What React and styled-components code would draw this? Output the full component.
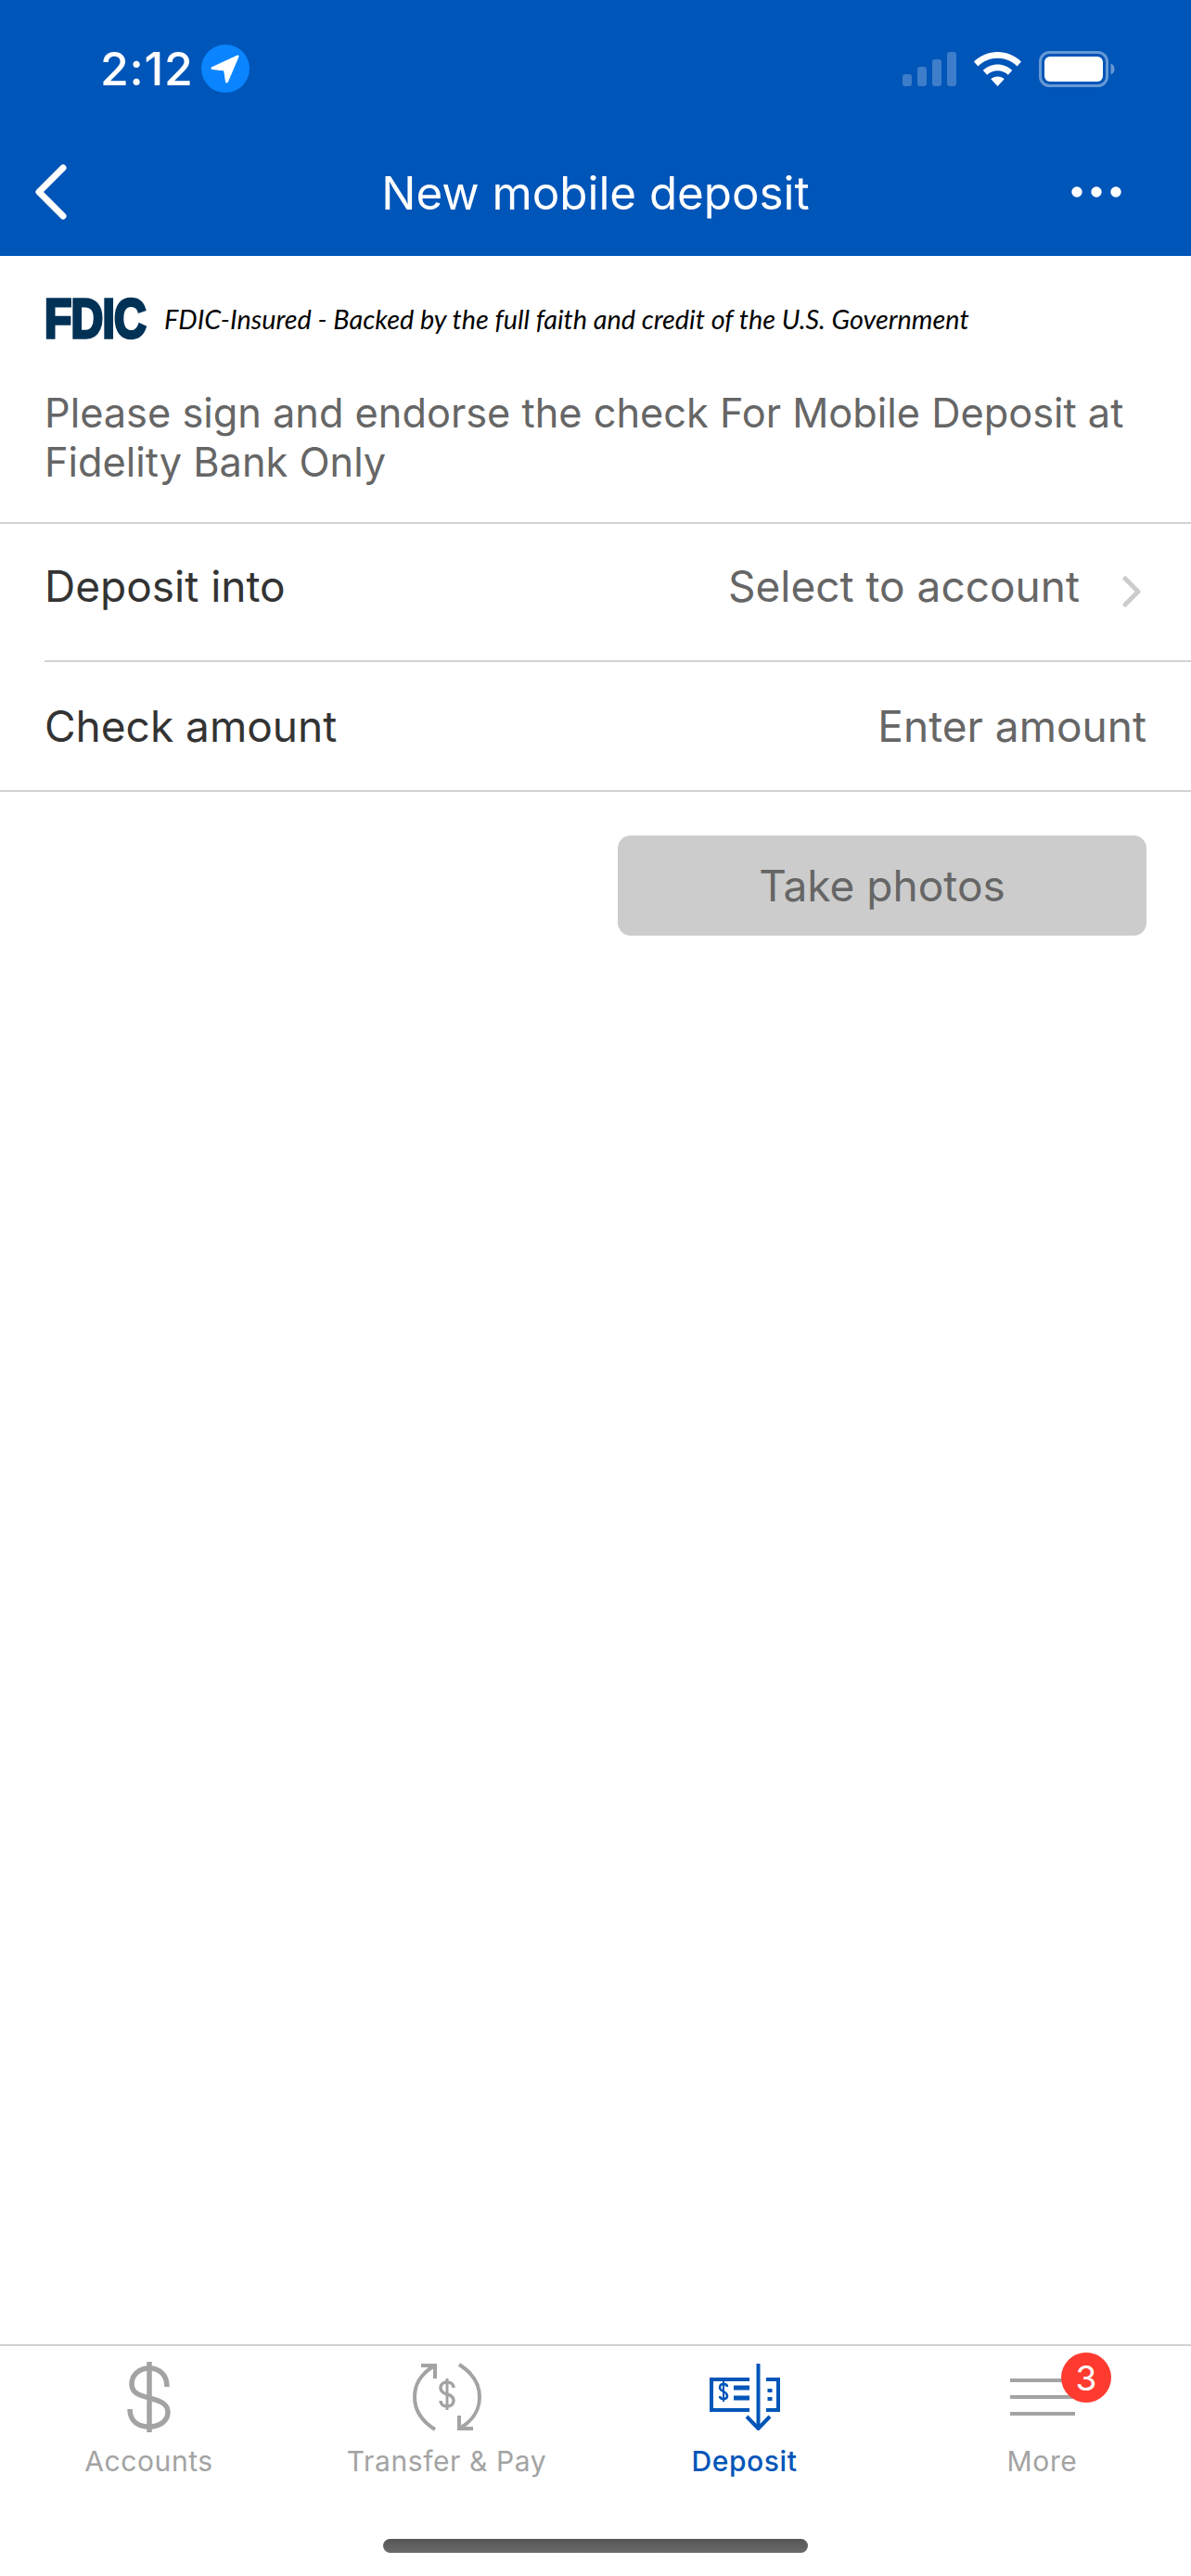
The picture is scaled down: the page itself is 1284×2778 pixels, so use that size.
import styled, { createGlobalStyle } from "styled-components";

const BLUE = "#0055b8";
const GREY_TEXT = "#666666";
const RULE = "#d2d2d2";
const TAB_GREY = "#a3a3a3";

const Global = createGlobalStyle`
  html, body { margin: 0; padding: 0; background: #fff; }
  * { box-sizing: border-box; }
`;

const Screen = styled.div`
  width: 1284px;
  height: 2778px;
  display: flex;
  flex-direction: column;
  overflow: hidden;
  background: #fff;
  font-family: Inter, "Liberation Sans", sans-serif;
`;

const Header = styled.header`
  background: ${BLUE};
  height: 276px;
  color: #fff;
`;

const StatusBar = styled.div`
  height: 148px;
  display: flex;
  align-items: center;
  justify-content: space-between;
  padding: 0 82px 0 108px;
`;

const TimeGroup = styled.div`
  display: flex;
  align-items: center;
  gap: 8px;
`;

const Time = styled.span`
  font-size: 50px;
  font-weight: 500;
  letter-spacing: 0.8px;
  line-height: 1;
`;

const Indicators = styled.div`
  display: flex;
  align-items: center;
  gap: 19px;
`;

const NavBar = styled.nav`
  height: 128px;
  padding-bottom: 6px;
  display: grid;
  grid-template-columns: 1fr auto 1fr;
  align-items: center;
`;

const Title = styled.h1`
  margin: 0;
  font-size: 49.300px;
  font-weight: 400;
  line-height: 1;
`;

const NavEnd = styled.div`
  display: flex;
  justify-content: ${(p) => (p.$right ? "flex-end" : "flex-start")};
  padding: ${(p) => (p.$right ? "0 75px 0 0" : "0 0 0 37px")};
  margin-bottom: 4px;
`;

const Main = styled.main`
  flex: 1;
`;

const FdicRow = styled.div`
  height: 88px;
  padding: 48px 48px 0;
  display: flex;
  align-items: center;
  gap: 18px;
`;

const FdicMark = styled.span`
  width: 111px;
  height: 44px;
  flex: none;
  font-family: "Liberation Sans", sans-serif;
  font-weight: 700;
  font-size: 60px;
  line-height: 44px;
  letter-spacing: -1px;
  color: #003256;
  -webkit-text-stroke: 3.500px #003256;
  white-space: nowrap;
  transform: scaleX(0.8);
  transform-origin: left center;
`;

const FdicText = styled.span`
  font-family: Lato, "Open Sans", sans-serif;
  font-style: italic;
  font-size: 28.800px;
  color: #000;
  white-space: nowrap;
`;

const Notice = styled.p`
  margin: 0;
  padding: 55px 40px 38px 48px;
  font-size: 43.300px;
  line-height: 53px;
  color: ${GREY_TEXT};
  border-bottom: 2px solid ${RULE};
`;

const Row = styled.div`
  margin-left: ${(p) => (p.$inset ? "48px" : "0")};
  padding: 0 ${(p) => p.$endPad}px ${(p) => p.$bottomPad || 0}px ${(p) => (p.$inset ? "0" : "48px")};
  height: ${(p) => p.$height}px;
  display: flex;
  align-items: center;
  justify-content: space-between;
  border-bottom: 2px solid ${RULE};
`;

const RowLabel = styled.span`
  font-size: 46px;
  color: #333;
`;

const RowValue = styled.span`
  display: flex;
  align-items: center;
  gap: 46px;
  font-size: 46px;
  color: ${GREY_TEXT};
`;

const ChevronSlot = styled.span`
  display: flex;
  position: relative;
  top: 6px;
`;

const Actions = styled.div`
  display: flex;
  justify-content: flex-end;
  padding: 47px 48px 0;
`;

const PhotoButton = styled.button`
  width: 570px;
  height: 108px;
  border: 0;
  border-radius: 14px;
  background: #cccccc;
  color: ${GREY_TEXT};
  font-family: inherit;
  font-size: 46px;
`;

const TabBar = styled.footer`
  height: 250px;
  border-top: 2px solid ${RULE};
  display: flex;
  flex-direction: column;
`;

const Tabs = styled.div`
  display: grid;
  grid-template-columns: repeat(4, 1fr);
`;

const Tab = styled.div`
  position: relative;
  height: 208px;
  padding-top: 14px;
  display: flex;
  flex-direction: column;
  align-items: center;
  color: ${(p) => (p.$active ? BLUE : TAB_GREY)};
`;

const TabIcon = styled.div`
  height: 82px;
  display: flex;
  align-items: center;
  justify-content: center;
`;

const TabLabel = styled.span`
  margin-top: 10px;
  font-size: 30px;
  font-weight: ${(p) => (p.$active ? 500 : 400)};
  letter-spacing: 0.6px;
  line-height: 36px;
`;

const Badge = styled.span`
  position: absolute;
  top: 7px;
  left: 181px;
  width: 54px;
  height: 54px;
  border-radius: 50%;
  background: #ff3b30;
  color: #fff;
  font-size: 37px;
  display: flex;
  align-items: center;
  justify-content: center;
`;

const HomeBar = styled.div`
  align-self: center;
  width: 458px;
  height: 15px;
  border-radius: 8px;
  background: linear-gradient(#555, #6a6a6a);
`;

function LocationBadge() {
  return (
    <svg width="52" height="52" viewBox="0 0 52 52">
      <circle cx="26" cy="26" r="26" fill="#0a84ff" />
      <path
        d="M39 13 L12 25.500 L25.500 27 L27.500 40 Z"
        fill="#fff"
        stroke="#fff"
        strokeWidth="3"
        strokeLinejoin="round"
      />
    </svg>
  );
}

function SignalBars() {
  return (
    <svg width="58" height="37" viewBox="0 0 58 37" fill="#fff" fillOpacity="0.24">
      <rect x="0" y="24" width="10" height="13" rx="3" />
      <rect x="16" y="16" width="10" height="21" rx="3" />
      <rect x="32" y="8" width="10" height="29" rx="3" />
      <rect x="48" y="0" width="10" height="37" rx="3" />
    </svg>
  );
}

function WifiIcon() {
  return (
    <svg width="51" height="37" viewBox="0 0 51 37" fill="#fff">
      <path d="M25.500 0C35 0 44 3.800 51 10.500L46.600 15.500C41 10 33.500 6.800 25.500 6.800C17.500 6.800 10 10 4.400 15.500L0 10.500C7 3.800 16 0 25.500 0Z" />
      <path d="M25.500 13.500C31.500 13.500 37 15.900 41.300 19.800L36.900 24.800C33.800 22 29.800 20.300 25.500 20.300C21.200 20.300 17.200 22 14.100 24.800L9.700 19.800C14 15.900 19.500 13.500 25.500 13.500Z" />
      <path d="M25.500 26.500C28.300 26.500 30.800 27.500 32.700 29.200L25.500 37L18.300 29.200C20.200 27.500 22.700 26.500 25.500 26.500Z" />
    </svg>
  );
}

function BatteryIcon() {
  return (
    <svg width="82" height="39" viewBox="0 0 82 39">
      <rect x="1.500" y="1.500" width="72" height="36" rx="10" fill="none" stroke="#fff" strokeOpacity="0.4" strokeWidth="3" />
      <rect x="6" y="6" width="63" height="27" rx="6" fill="#fff" />
      <path d="M77.500 13.500C80 14.500 81.500 16.800 81.500 19.500C81.500 22.200 80 24.500 77.500 25.500Z" fill="#fff" fillOpacity="0.4" />
    </svg>
  );
}

function BackChevron() {
  return (
    <svg width="36" height="60" viewBox="0 0 36 60" fill="none" stroke="#fff" strokeWidth="7" strokeLinecap="round" strokeLinejoin="round">
      <path d="M31 4 L5 30 L31 56" />
    </svg>
  );
}

function MoreDots() {
  return (
    <svg width="54" height="12" viewBox="0 0 54 12" fill="#fff">
      <circle cx="6" cy="6" r="5.700" />
      <circle cx="27" cy="6" r="5.700" />
      <circle cx="48" cy="6" r="5.700" />
    </svg>
  );
}

function RowChevron() {
  return (
    <svg width="20" height="34" viewBox="0 0 20 34" fill="none" stroke="#cccccc" strokeWidth="5" strokeLinecap="round" strokeLinejoin="round">
      <path d="M3 3 L17 17 L3 31" />
    </svg>
  );
}

function DollarIcon() {
  return (
    <svg width="48" height="76" viewBox="0 0 48 76" fill="none" stroke="currentColor" strokeWidth="5.500">
      <path d="M43 27C43 14 35 7 24 7C13 7 5 14 5 24C5 34 13 36 24 39C35 42 44 45 44 54C44 64 35 70 24 70C12 70 3 64 3 51" />
      <path d="M24 0V76" />
    </svg>
  );
}

function TransferIcon() {
  return (
    <svg width="74" height="74" viewBox="0 0 74 74" fill="none" stroke="currentColor" strokeWidth="4">
      <path d="M24 72C8 62 2 50 2 37C2 23 8 13 22 4" />
      <path d="M9 3H24V17" />
      <path d="M50 2C66 12 72 24 72 37C72 51 66 61 52 70" />
      <path d="M65 71H50V57" />
      <path d="M44 27C44 23 41 21 37 21C33 21 30 23 30 27C30 31 33 33 37 34C41 35 44 37 44 41C44 45 41 47 37 47C33 47 30 45 30 41" strokeWidth="3.500" />
      <path d="M37 17V51" strokeWidth="3" />
    </svg>
  );
}

function DepositIcon() {
  return (
    <svg width="76" height="72" viewBox="0 0 76 72" fill="none" stroke="currentColor" strokeWidth="4">
      <path d="M43 17H2V50H43" />
      <path d="M61 17H74V50H61" />
      <path d="M52.500 0V70" />
      <path d="M40 57L52.500 70L65 57" />
      <path d="M26 26H43M26 37H43" strokeWidth="5" />
      <path d="M65 27V31M65 36V40" strokeWidth="5" />
      <path d="M19 25C19 23 17 22 15 22C13 22 11 23 11 26C11 28 13 29 15 30C17 31 19 32 19 35C19 37 17 38 15 38C13 38 11 37 11 35" strokeWidth="2.500" />
      <path d="M15 19V41" strokeWidth="2" />
    </svg>
  );
}

function MenuIcon() {
  return (
    <svg width="70" height="40" viewBox="0 0 70 40" fill="currentColor">
      <rect x="0" y="0" width="70" height="4" />
      <rect x="0" y="18" width="70" height="4" />
      <rect x="0" y="36" width="70" height="4" />
    </svg>
  );
}

const TAB_ITEMS = [
  { label: "Accounts", icon: <DollarIcon /> },
  { label: "Transfer & Pay", icon: <TransferIcon /> },
  { label: "Deposit", icon: <DepositIcon />, active: true },
  { label: "More", icon: <MenuIcon />, badge: 3 },
];

export default function App() {
  return (
    <Screen>
      <Global />
      <Header>
        <StatusBar>
          <TimeGroup>
            <Time>2:12</Time>
            <LocationBadge />
          </TimeGroup>
          <Indicators>
            <SignalBars />
            <WifiIcon />
            <BatteryIcon />
          </Indicators>
        </StatusBar>
        <NavBar>
          <NavEnd>
            <BackChevron />
          </NavEnd>
          <Title>New mobile deposit</Title>
          <NavEnd $right>
            <MoreDots />
          </NavEnd>
        </NavBar>
      </Header>
      <Main>
        <FdicRow>
          <FdicMark>FDIC</FdicMark>
          <FdicText>FDIC-Insured - Backed by the full faith and credit of the U.S. Government</FdicText>
        </FdicRow>
        <Notice>Please sign and endorse the check For Mobile Deposit at Fidelity Bank Only</Notice>
        <Row $inset $height={149} $endPad={54} $bottomPad={14}>
          <RowLabel>Deposit into</RowLabel>
          <RowValue>
            Select to account
            <ChevronSlot>
              <RowChevron />
            </ChevronSlot>
          </RowValue>
        </Row>
        <Row $height={140} $endPad={48}>
          <RowLabel>Check amount</RowLabel>
          <RowValue>Enter amount</RowValue>
        </Row>
        <Actions>
          <PhotoButton>Take photos</PhotoButton>
        </Actions>
      </Main>
      <TabBar>
        <Tabs>
          {TAB_ITEMS.map((tab) => (
            <Tab key={tab.label} $active={tab.active}>
              <TabIcon>{tab.icon}</TabIcon>
              <TabLabel $active={tab.active}>{tab.label}</TabLabel>
              {tab.badge && <Badge>{tab.badge}</Badge>}
            </Tab>
          ))}
        </Tabs>
        <HomeBar />
      </TabBar>
    </Screen>
  );
}
